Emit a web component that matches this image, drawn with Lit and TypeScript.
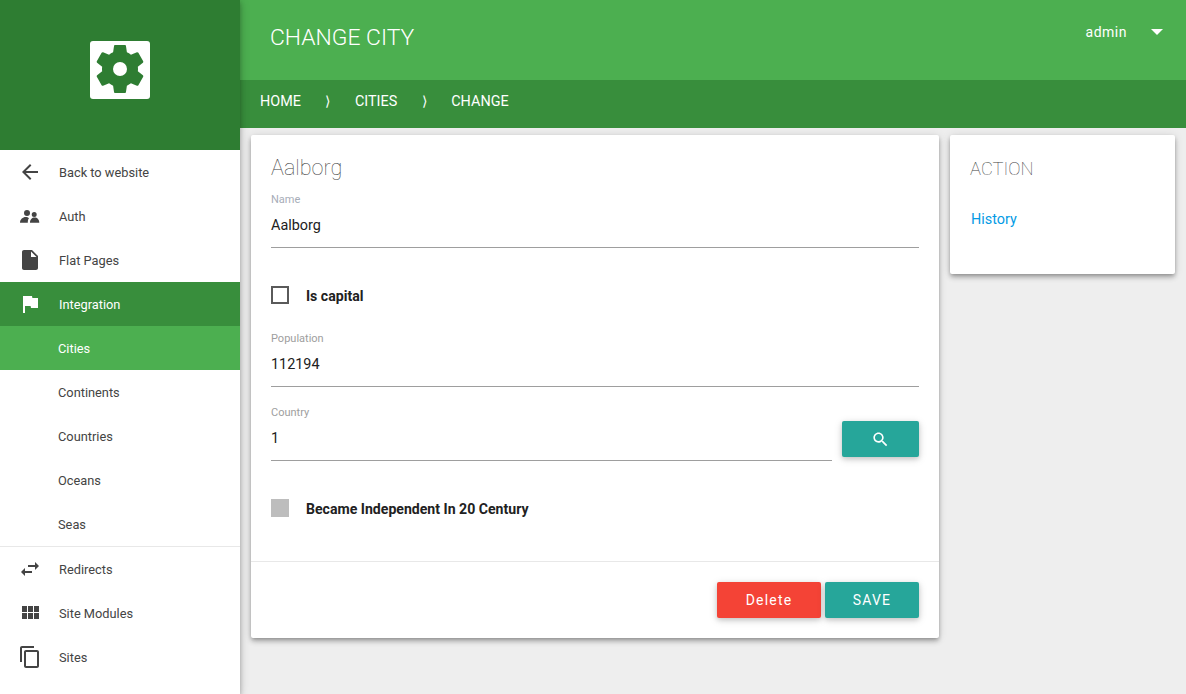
import { LitElement, html, css, svg } from "lit";
import { customElement } from "lit/decorators.js";

const gear = "M19.43 12.98c.04-.32.07-.64.07-.98s-.03-.66-.07-.98l2.11-1.65c.19-.15.24-.42.12-.64l-2-3.46c-.12-.22-.39-.3-.61-.22l-2.49 1c-.52-.4-1.08-.73-1.69-.98l-.38-2.65C14.46 2.18 14.25 2 14 2h-4c-.25 0-.46.18-.49.42l-.38 2.65c-.61.25-1.17.59-1.69.98l-2.49-1c-.23-.09-.49 0-.61.22l-2 3.46c-.13.22-.07.49.12.64l2.11 1.65c-.04.32-.07.65-.07.98s.03.66.07.98l-2.11 1.65c-.19.15-.24.42-.12.64l2 3.46c.12.22.39.3.61.22l2.49-1c.52.4 1.08.73 1.69.98l.38 2.65c.03.24.24.42.49.42h4c.25 0 .46-.18.49-.42l.38-2.65c.61-.25 1.17-.59 1.69-.98l2.49 1c.23.09.49 0 .61-.22l2-3.46c.12-.22.07-.49-.12-.64l-2.11-1.65z";

const icons: Record<string, string> = {
  back: "M20 11H7.83l5.59-5.59L12 4l-8 8 8 8 1.41-1.41L7.83 13H20v-2z",
  people: "M9 6a3 3 0 1 1 0 6a3 3 0 0 1 0-6zM16.2 8a2.5 2.5 0 1 1 0 5a2.5 2.5 0 0 1 0-5zM2 18.8C2 15.2 5 13 7.5 13C9 13 10.2 13.4 11 14.2C10.1 15 9.8 16.6 9.8 18.8zM12 18.8C12 15.6 14 13.6 16.6 13.6C19.3 13.6 21.3 15.6 21.3 18.8z",
  file: "M6 2c-1.1 0-1.99.9-1.99 2L4 20c0 1.1.89 2 1.99 2H18c1.1 0 2-.9 2-2V8l-6-6H6zm7 7V3.5L18.5 9H13z",
  flag: "M14.4 6L14 4H5v17h2v-7h5.6l.4 2h7V6z",
  swap: "M6.99 11L3 15l3.99 4v-3H14v-2H6.99v-3zM21 9l-3.99-4v3H10v2h7.01v3L21 9z",
  grid: "M4 11h5V5H4v6zm0 7h5v-6H4v6zm6 0h5v-6h-5v6zm6 0h5v-6h-5v6zm-6-7h5V5h-5v6zm6-6v6h5V5h-5z",
  copy: "M16 1H4c-1.1 0-2 .9-2 2v14h2V3h12V1zm3 4H8c-1.1 0-2 .9-2 2v14c0 1.1.9 2 2 2h11c1.1 0 2-.9 2-2V7c0-1.1-.9-2-2-2zm0 16H8V7h11v14z",
  search: "M15.5 14h-.79l-.28-.27C15.41 12.59 16 11.11 16 9.5 16 5.91 13.09 3 9.5 3S3 5.91 3 9.5 5.91 16 9.5 16c1.61 0 3.09-.59 4.23-1.57l.27.28v.79l5 4.99L20.49 19l-4.99-5zm-6 0C7.01 14 5 11.99 5 9.5S7.01 5 9.5 5 14 7.01 14 9.5 11.99 14 9.5 14z",
};

const icon = (name: string, size = 24) => html`<svg class="icon" width=${size} height=${size} viewBox="0 0 24 24" fill="currentColor">${svg`<path d=${icons[name]}></path>`}</svg>`;

@customElement("app-root")
export class AppRoot extends LitElement {
  static styles = css`
    :host { display: flex; height: 694px; width: 1186px; overflow: hidden; background: #eeeeee; font-family: Roboto, "Liberation Sans", sans-serif; color: #212121; }
    * { box-sizing: border-box; }
    .icon { display: block; flex: none; }

    .side { width: 240px; flex: none; background: #fff; box-shadow: 0 2px 5px rgba(0,0,0,.26), 0 2px 10px rgba(0,0,0,.16); z-index: 2; display: flex; flex-direction: column; }
    .logo { height: 150px; background: #2e7d32; display: flex; justify-content: center; align-items: flex-start; padding-top: 41px; }
    .row { height: 44px; display: flex; align-items: center; padding-left: 18px; font-size: 12.8px; color: #444; }
    .row .icon { margin-right: 17px; color: #444; }
    .row.active { background: #388e3c; color: #fff; }
    .row.active .icon { color: #fff; }
    .row.sub { padding-left: 58px; }
    .row.cur { background: #4caf50; color: #fff; }
    .divider { height: 1px; background: #e8e8e8; }

    .main { flex: 1; min-width: 0; display: flex; flex-direction: column; }
    .top { height: 80px; background: #4caf50; color: #fff; display: flex; justify-content: space-between; padding-left: 30px; padding-right: 23px; }
    .title { font-size: 22.9px; font-weight: 300; line-height: 76px; }
    .user { display: flex; align-items: center; height: 64px; font-size: 14px; letter-spacing: .5px; }
    .caret { width: 0; height: 0; border-left: 6px solid transparent; border-right: 6px solid transparent; border-top: 6px solid #fff; margin-left: 24px; }
    .crumbs { height: 48px; background: #388e3c; color: #fff; display: flex; align-items: center; padding: 0 0 6px 20px; font-size: 14.4px; }
    .sep { width: 54px; text-align: center; font-size: 14px; }

    .content { flex: 1; display: flex; align-items: flex-start; gap: 11px; padding: 7px 11px 0; }
    .card { background: #fff; border-radius: 2px; box-shadow: 0 4px 5px rgba(0,0,0,.14), 0 1px 10px rgba(0,0,0,.12), 0 2px 4px -1px rgba(0,0,0,.3); }
    .form { width: 688px; height: 503px; display: flex; flex-direction: column; }
    .body { height: 427px; padding: 18px 20px 0; border-bottom: 1px solid #e8e8e8; }
    .name { font-size: 21.6px; font-weight: 100; line-height: 30px; margin-bottom: -2px; color: #424242; }
    .field { border-bottom: 1px solid #9e9e9e; height: 59px; padding-top: 4px; }
    .field label { display: block; font-size: 11px; line-height: 14px; color: #9e9e9e; }
    .field .val { font-size: 14.4px; line-height: 20px; margin-top: 9px; }
    .f-name { margin-top: 2px; padding-top: 10px; height: 65px; }
    .f-name label { color: #a7adb8; }
    .check { display: flex; align-items: center; font-size: 14.1px; font-weight: 700; height: 18px; }
    .box { width: 18px; height: 18px; border: 2px solid #5a5a5a; margin: -2px 17px 0 0; flex: none; }
    .box.dis { background: #bdbdbd; border-color: #bdbdbd; }
    .c-cap { margin-top: 39px; }
    .f-pop { margin-top: 24px; height: 58px; padding-top: 3px; }
    .country { display: flex; gap: 10px; margin-top: 15px; align-items: flex-start; }
    .country .field { flex: 1; }
    .c-ind { margin-top: 39px; }
    .btn { border: 0; border-radius: 2px; color: #fff; height: 36px; display: flex; align-items: center; justify-content: center; font-family: inherit; font-size: 14px; letter-spacing: 1.2px; box-shadow: 0 2px 5px rgba(0,0,0,.16), 0 2px 10px rgba(0,0,0,.12); padding: 0; }
    .teal { background: #26a69a; }
    .red { background: #f44336; }
    .find { width: 77px; margin-top: 19px; }
    .foot { flex: 1; display: flex; justify-content: flex-end; align-items: flex-start; gap: 4px; padding: 20px 20px 0; }
    .foot .red { width: 104px; }
    .foot .teal { width: 94px; }

    .aside { width: 225px; height: 139px; padding: 24px 20px 0; }
    .aside h3 { margin: 0; font-size: 18.4px; font-weight: 100; line-height: 20px; color: #424242; }
    .aside a { display: block; margin: 31px 0 0 1px; font-size: 14.4px; line-height: 20px; color: #039be5; }
  `;

  render() {
    return html`
      <aside class="side">
        <div class="logo">
          <svg width="60" height="58" viewBox="0 0 60 58">
            <rect width="60" height="58" rx="3" fill="#fff"></rect>
            <g transform="translate(1.2 -.8) scale(2.4)"><path d=${gear} fill="#2e7d32"></path></g>
            <circle cx="30" cy="28" r="7" fill="#fff"></circle>
          </svg>
        </div>
        <div class="row">${icon("back")}Back to website</div>
        <div class="row">${icon("people")}Auth</div>
        <div class="row">${icon("file")}Flat Pages</div>
        <div class="row active">${icon("flag")}Integration</div>
        <div class="row sub cur">Cities</div>
        <div class="row sub">Continents</div>
        <div class="row sub">Countries</div>
        <div class="row sub">Oceans</div>
        <div class="row sub">Seas</div>
        <div class="divider"></div>
        <div class="row">${icon("swap")}Redirects</div>
        <div class="row">${icon("grid")}Site Modules</div>
        <div class="row">${icon("copy")}Sites</div>
      </aside>
      <div class="main">
        <header class="top">
          <div class="title">CHANGE CITY</div>
          <div class="user">admin<span class="caret"></span></div>
        </header>
        <nav class="crumbs"><span>HOME</span><span class="sep">⟩</span><span>CITIES</span><span class="sep">⟩</span><span>CHANGE</span></nav>
        <div class="content">
          <section class="card form">
            <div class="body">
              <div class="name">Aalborg</div>
              <div class="field f-name"><label>Name</label><div class="val">Aalborg</div></div>
              <div class="check c-cap"><span class="box"></span>Is capital</div>
              <div class="field f-pop"><label>Population</label><div class="val">112194</div></div>
              <div class="country">
                <div class="field"><label>Country</label><div class="val">1</div></div>
                <button class="btn teal find">${icon("search", 19)}</button>
              </div>
              <div class="check c-ind"><span class="box dis"></span>Became Independent In 20 Century</div>
            </div>
            <div class="foot">
              <button class="btn red">Delete</button>
              <button class="btn teal">SAVE</button>
            </div>
          </section>
          <section class="card aside">
            <h3>ACTION</h3>
            <a>History</a>
          </section>
        </div>
      </div>
    `;
  }
}
